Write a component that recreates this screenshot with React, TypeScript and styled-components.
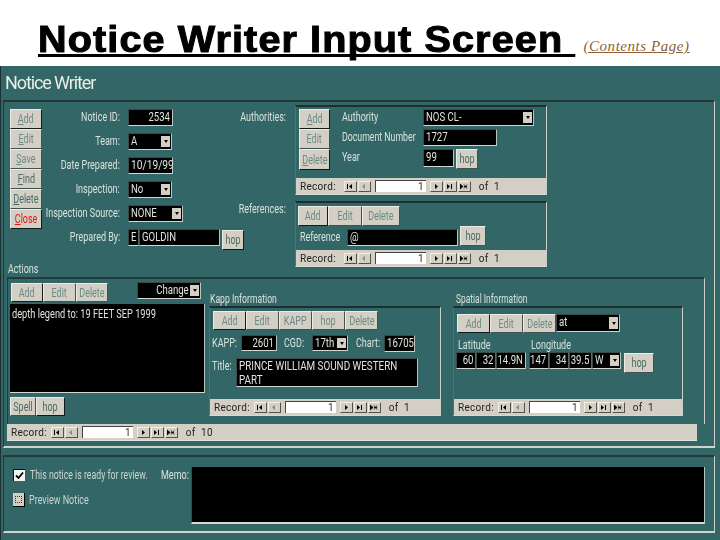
import React from "react";
import styled, { createGlobalStyle } from "styled-components";

const Global = createGlobalStyle`
  html, body { margin: 0; padding: 0; background: #fff; }
  #root { width: 720px; height: 540px; overflow: hidden; }
`;

const TEAL = "#336666";
const GREY = "#d4cfc4";
const UI = `Roboto, "Liberation Sans", sans-serif`;

const Page = styled.div`
  width: 720px;
  height: 540px;
  display: flex;
  flex-direction: column;
  background: #fff;
  font-family: ${UI};
  font-size: 12px;
`;
const Header = styled.header`
  height: 66px;
  flex: none;
  display: flex;
  align-items: flex-start;
  padding-left: 38px;
`;
const MainTitle = styled.h1`
  margin: 19px 0 0;
  font: bold 36px/42px "Liberation Sans", Arial, sans-serif;
  letter-spacing: 1px;
  -webkit-text-stroke: 1px #000;
  color: #000;
  white-space: pre;
  text-decoration: underline;
  text-decoration-thickness: 3px;
  text-underline-offset: 2px;
  text-decoration-skip-ink: none;
  transform: scaleX(1.1);
  transform-origin: left center;
`;
const ContentsLink = styled.a`
  margin: 38px 0 0 57px;
  font: italic 15px/16px "Liberation Serif", serif;
  letter-spacing: 0.55px;
  white-space: nowrap;
  color: #8a5f38;
  text-decoration: underline;
`;
const Win = styled.main`
  flex: 1;
  background: ${TEAL};
  color: #d8e2dc;
  border-left: 1px solid #1d3030;
  display: flex;
  flex-direction: column;
  min-height: 0;
  filter: blur(0.3px);
`;
const WinTitle = styled.div`
  height: 34px;
  flex: none;
  box-sizing: border-box;
  padding: 6px 0 0 4px;
  font-size: 18px;
  line-height: 22px;
  letter-spacing: -1.1px;
  color: #e8eee8;
`;
/* The reference's screen font is tall and narrow; this squeezes a run of text to that shape. */
const Narrow = styled.span<{ $s?: number; $o?: string }>`
  display: inline-block;
  flex: none;
  white-space: pre;
  transform: scaleX(${(p) => p.$s ?? 0.75});
  transform-origin: ${(p) => p.$o ?? "left"} center;
`;
const Frame = styled.section<{ $h: number }>`
  height: ${(p) => p.$h}px;
  width: 712px;
  margin-left: 2px;
  flex: none;
  box-sizing: border-box;
  border-top: 2px solid #243a38;
  border-left: 1px solid #243a38;
  border-right: 1px solid #c9d0c8;
  border-bottom: 2px solid #cfd3cb;
`;
const TopRow = styled.div`
  height: 161px;
  display: flex;
`;
const ButtonColumn = styled.div`
  width: 32px;
  margin: 7px 0 0 6px;
  display: flex;
  flex-direction: column;
`;
const FieldGrid = styled.div`
  width: 202px;
  margin-top: 7px;
  display: grid;
  grid-template-columns: 78px auto;
  grid-auto-rows: 17px;
  column-gap: 8px;
  row-gap: 7px;
  align-content: start;
`;
const LabelBox = styled.label<{ $right?: boolean; $w?: number; $pad?: number; $top?: number }>`
  display: flex;
  justify-content: ${(p) => (p.$right ? "flex-end" : "flex-start")};
  width: ${(p) => (p.$w ? `${p.$w}px` : "auto")};
  flex: none;
  box-sizing: border-box;
  padding-left: ${(p) => p.$pad ?? 0}px;
  margin-top: ${(p) => p.$top ?? 0}px;
  line-height: 17px;
`;
const FieldPair = styled.div`
  display: flex;
  align-items: flex-start;
  gap: 2px;
`;
const JoinedFields = styled.div`
  display: flex;
  align-items: flex-start;
`;
const FieldBox = styled.div<{ $w: number; $h?: number; $right?: boolean; $ml?: number; $seg?: boolean }>`
  width: ${(p) => p.$w}px;
  height: ${(p) => p.$h ?? 17}px;
  margin-left: ${(p) => p.$ml ?? 0}px;
  flex: none;
  box-sizing: border-box;
  display: flex;
  justify-content: ${(p) => (p.$right ? "flex-end" : "flex-start")};
  background: #000;
  color: #e2e2dc;
  border-top: 1px solid #3a4a48;
  border-left: 1px solid #3a4a48;
  border-right: 1px solid ${(p) => (p.$seg ? "#5a6a68" : "#b9c4bc")};
  border-bottom: 1px solid #d4d8d0;
  padding: 0 2px;
  line-height: 14px;
`;
const SelectBox = styled.div<{ $w: number; $h?: number }>`
  width: ${(p) => p.$w}px;
  height: ${(p) => p.$h ?? 17}px;
  flex: none;
  box-sizing: border-box;
  display: flex;
  align-items: stretch;
  background: #000;
  color: #e2e2dc;
  border-top: 1px solid #3a4a48;
  border-left: 1px solid #3a4a48;
  border-right: 1px solid #b9c4bc;
  border-bottom: 1px solid #d4d8d0;
  line-height: 14px;
`;
const SelectText = styled.span<{ $right?: boolean }>`
  flex: 1;
  min-width: 0;
  padding: 0 1px 0 2px;
  display: flex;
  justify-content: ${(p) => (p.$right ? "flex-end" : "flex-start")};
`;
const SelectArrow = styled.span`
  width: 9px;
  margin: 2px 1px 2px 0;
  flex: none;
  display: flex;
  align-items: center;
  justify-content: center;
  background: ${GREY};
  &::after {
    content: "";
    border-left: 2.5px solid transparent;
    border-right: 2.5px solid transparent;
    border-top: 3px solid #000;
  }
`;
const BtnBox = styled.button<{ $w?: number; $h?: number; $muted?: boolean; $red?: boolean; $dark?: boolean; $top?: number; $ml?: number }>`
  width: ${(p) => (p.$w ? `${p.$w}px` : "100%")};
  height: ${(p) => p.$h ?? 20}px;
  margin-top: ${(p) => p.$top ?? 0}px;
  margin-left: ${(p) => p.$ml ?? 0}px;
  flex: none;
  box-sizing: border-box;
  padding: 0;
  display: flex;
  align-items: center;
  justify-content: center;
  background: ${GREY};
  border-top: 1px solid #ecebe4;
  border-left: 1px solid #ecebe4;
  border-right: 1px solid ${(p) => (p.$dark ? "#101c1c" : "#425250")};
  border-bottom: 1px solid ${(p) => (p.$dark ? "#101c1c" : "#425250")};
  font: inherit;
  line-height: 16px;
  color: ${(p) => (p.$red ? "#e01818" : p.$muted ? "#6b8a86" : "#4a6a68")};
`;
const SideGroup = styled.div`
  margin: 3px 0 0 0;
  display: grid;
  grid-template-columns: 42px 252px;
  column-gap: 9px;
  row-gap: 6px;
  align-content: start;
`;
const SubForm = styled.div<{ $w: number; $h: number }>`
  width: ${(p) => p.$w}px;
  height: ${(p) => p.$h}px;
  flex: none;
  box-sizing: border-box;
  display: flex;
  flex-direction: column;
  border-top: 2px solid #1e2e2c;
  border-left: 1px solid #5c6e6a;
  border-right: 1px solid #c9d0c8;
  border-bottom: 1px solid #d8dad2;
`;
const SubBody = styled.div`
  flex: 1;
  min-height: 0;
`;
const AuthBody = styled(SubBody)`
  display: flex;
  padding: 2px 0 0 3px;
`;
const NarrowButtons = styled.div`
  width: 31px;
  display: flex;
  flex-direction: column;
`;
const AuthGrid = styled.div`
  margin-left: 12px;
  display: grid;
  grid-template-columns: 81px auto;
  grid-auto-rows: 17px;
  row-gap: 3px;
  align-content: start;
`;
const Toolbar = styled.div<{ $pad?: string }>`
  display: flex;
  align-items: flex-start;
  padding: ${(p) => p.$pad ?? "0"};
`;
const RefRow = styled.div`
  display: flex;
  align-items: flex-start;
  padding: 3px 0 0 4px;
`;
const RecordBar = styled.div`
  height: 16px;
  flex: none;
  box-sizing: border-box;
  display: flex;
  align-items: center;
  padding-left: 4px;
  background: ${GREY};
  color: #222;
  font-size: 10px;
  letter-spacing: 0.3px;
`;
const RecordLabel = styled.span<{ $gap: number }>`
  margin-right: ${(p) => p.$gap}px;
`;
const NavBtn = styled.span<{ $after?: number }>`
  width: 13px;
  height: 11px;
  flex: none;
  margin-right: ${(p) => p.$after ?? 1}px;
  box-sizing: border-box;
  display: flex;
  align-items: center;
  justify-content: center;
  border-top: 1px solid #f0efe8;
  border-left: 1px solid #f0efe8;
  border-right: 1px solid #55524a;
  border-bottom: 1px solid #55524a;
  color: #000;
`;
const RecordInput = styled.span`
  width: 51px;
  height: 12px;
  flex: none;
  margin-right: 4px;
  box-sizing: border-box;
  background: #fff;
  border-top: 1px solid #444;
  border-left: 1px solid #444;
  color: #333;
  text-align: right;
  padding-right: 2px;
  line-height: 12px;
`;
const OfText = styled.span`
  margin-left: 4px;
  white-space: pre;
`;
const ActionsLabel = styled.div`
  height: 14px;
  padding-left: 4px;
  line-height: 13px;
`;
const ActionsBody = styled.div`
  width: 698px;
  height: 147px;
  margin-left: 3px;
  box-sizing: border-box;
  display: flex;
  border-top: 2px solid #243a38;
  border-left: 1px solid #243a38;
  border-right: 1px solid #c9d0c8;
`;
const ActionsFooter = styled.div`
  margin-left: 3px;
  width: 690px;
  border-bottom: 1px solid #e4e6de;
`;
const ActionsLeft = styled.div`
  width: 195px;
  margin: 0 4px 0 2px;
  display: flex;
  flex-direction: column;
`;
const ChangeSpacer = styled.div`
  margin: 3px 0 0 29px;
`;
const NoteArea = styled.div`
  width: 195px;
  height: 89px;
  margin-top: 2px;
  box-sizing: border-box;
  background: #000;
  color: #e2e2dc;
  border-right: 1px solid #b9c4bc;
  border-bottom: 1px solid #d4d8d0;
  padding: 3px 2px;
  line-height: 14px;
`;
const InfoColumn = styled.div<{ $gapRight?: number }>`
  display: flex;
  flex-direction: column;
  margin-right: ${(p) => p.$gapRight ?? 0}px;
`;
const InfoLabel = styled.div<{ $pad?: number }>`
  height: 27px;
  flex: none;
  box-sizing: border-box;
  padding: 13px 0 0 ${(p) => p.$pad ?? 1}px;
  line-height: 14px;
`;
const InfoRow = styled.div<{ $top: number }>`
  display: flex;
  align-items: flex-start;
  padding: ${(p) => p.$top}px 0 0 2px;
`;
const CoordHead = styled.div<{ $w: number }>`
  width: ${(p) => p.$w}px;
  flex: none;
  line-height: 14px;
  padding-left: 2px;
  box-sizing: border-box;
`;
const BottomFrame = styled(Frame)`
  margin-top: 7px;
  display: flex;
`;
const ReviewCol = styled.div`
  width: 157px;
  flex: none;
  padding: 11px 0 0 9px;
  box-sizing: border-box;
`;
const ReviewRow = styled.div<{ $top?: number }>`
  display: flex;
  align-items: center;
  margin-top: ${(p) => p.$top ?? 0}px;
  color: #c9d6d0;
`;
const Check = styled.span`
  width: 11px;
  height: 11px;
  margin-right: 5px;
  flex: none;
  display: flex;
  align-items: center;
  justify-content: center;
  background: #f4f4ee;
  border-top: 1px solid #111;
  border-left: 1px solid #111;
`;
const PreviewBtn = styled.span`
  width: 12px;
  height: 14px;
  margin-right: 4px;
  flex: none;
  box-sizing: border-box;
  background: ${GREY};
  border-right: 1px solid #000;
  border-bottom: 1px solid #000;
  padding: 3px 2px;
  &::after {
    content: "";
    display: block;
    height: 100%;
    border: 1px dotted #333;
    box-sizing: border-box;
  }
`;
const MemoWrap = styled.div`
  display: flex;
  align-items: flex-start;
  padding-top: 10px;
`;
const MemoArea = styled.div`
  width: 514px;
  height: 57px;
  box-sizing: border-box;
  background: #000;
  border-right: 1px solid #b9c4bc;
  border-bottom: 2px solid #d4d8d0;
  border-left: 1px solid #3a4a48;
`;

type NavKind = "first" | "prev" | "next" | "last" | "new";
const NAV: Record<NavKind, string> = {
  first: "M1 1v5h1V1zM6 1v5L3 3.5z",
  prev: "M5 1v5L2 3.5z",
  next: "M3 1v5l3-2.5z",
  last: "M1 1v5l3-2.5zM5 1v5h1V1z",
  new: "M0 1v5l3-2.5zM4 1.5 7 5.5M7 1.5 4 5.5M3.8 3.5h3.4",
};
const NavIcon = ({ kind, faded }: { kind: NavKind; faded?: boolean }) => (
  <svg width="8" height="7" viewBox="0 0 8 7">
    <path
      d={NAV[kind]}
      fill={faded ? "#8d8a80" : "#000"}
      stroke={kind === "new" ? "#000" : "none"}
      strokeWidth={kind === "new" ? 0.8 : 0}
    />
  </svg>
);

const Record = ({ gap = 4, of = "1" }: { gap?: number; of?: string }) => (
  <RecordBar>
    <RecordLabel $gap={gap}>Record:</RecordLabel>
    <NavBtn><NavIcon kind="first" /></NavBtn>
    <NavBtn $after={4}><NavIcon kind="prev" faded /></NavBtn>
    <RecordInput>1</RecordInput>
    <NavBtn><NavIcon kind="next" /></NavBtn>
    <NavBtn><NavIcon kind="last" /></NavBtn>
    <NavBtn><NavIcon kind="new" /></NavBtn>
    <OfText> of  {of}</OfText>
  </RecordBar>
);

type Kids = { children?: React.ReactNode };

const Lbl = ({ right, w, pad, top, s, children }: Kids & { right?: boolean; w?: number; pad?: number; top?: number; s?: number }) => (
  <LabelBox $right={right} $w={w} $pad={pad} $top={top}>
    <Narrow $s={s} $o={right ? "right" : "left"}>{children}</Narrow>
  </LabelBox>
);

const Fld = ({ w, h, right, ml, s = 0.8, seg, children }: Kids & { w: number; h?: number; right?: boolean; ml?: number; s?: number; seg?: boolean }) => (
  <FieldBox $w={w} $h={h} $right={right} $ml={ml} $seg={seg}>
    <Narrow $s={s} $o={right ? "right" : "left"}>{children}</Narrow>
  </FieldBox>
);

const Select = ({ w, h, right, children }: Kids & { w: number; h?: number; right?: boolean }) => (
  <SelectBox $w={w} $h={h}>
    <SelectText $right={right}>
      <Narrow $s={0.8} $o={right ? "right" : "left"}>{children}</Narrow>
    </SelectText>
    <SelectArrow />
  </SelectBox>
);

const Btn = ({ w, h, muted, red, dark, top, ml, children }: Kids & { w?: number; h?: number; muted?: boolean; red?: boolean; dark?: boolean; top?: number; ml?: number }) => (
  <BtnBox $w={w} $h={h} $muted={muted} $red={red} $dark={dark} $top={top} $ml={ml}>
    <Narrow $o="center">{children}</Narrow>
  </BtnBox>
);

export default function App() {
  return (
    <Page>
      <Global />
      <Header>
        <MainTitle>Notice Writer Input Screen </MainTitle>
        <ContentsLink href="#">(Contents Page)</ContentsLink>
      </Header>
      <Win>
        <WinTitle>Notice Writer</WinTitle>
        <Frame $h={348}>
          <TopRow>
            <ButtonColumn>
              <Btn muted dark><u>A</u>dd</Btn>
              <Btn muted><u>E</u>dit</Btn>
              <Btn muted><u>S</u>ave</Btn>
              <Btn><u>F</u>ind</Btn>
              <Btn><u>D</u>elete</Btn>
              <Btn red dark><u>C</u>lose</Btn>
            </ButtonColumn>
            <FieldGrid>
              <Lbl right>Notice ID:</Lbl>
              <Fld w={45} right>2534</Fld>
              <Lbl right>Team:</Lbl>
              <Select w={44}>A</Select>
              <Lbl right>Date Prepared:</Lbl>
              <Fld w={45} s={0.85}>10/19/99</Fld>
              <Lbl right>Inspection:</Lbl>
              <Select w={44}>No</Select>
              <Lbl right>Inspection Source:</Lbl>
              <Select w={55}>NONE</Select>
              <Lbl right>Prepared By:</Lbl>
              <FieldPair>
                <JoinedFields>
                  <Fld w={11} seg>E</Fld>
                  <Fld w={81}>GOLDIN</Fld>
                </JoinedFields>
                <Btn w={22} h={20} top={1} dark>hop</Btn>
              </FieldPair>
            </FieldGrid>
            <SideGroup>
              <Lbl right top={4}>Authorities:</Lbl>
              <SubForm $w={252} $h={90}>
                <AuthBody>
                  <NarrowButtons>
                    <Btn muted dark><u>A</u>dd</Btn>
                    <Btn muted>Edit</Btn>
                    <Btn muted dark h={21}><u>D</u>elete</Btn>
                  </NarrowButtons>
                  <AuthGrid>
                    <Lbl>Authority</Lbl>
                    <Select w={111}>NOS CL-</Select>
                    <Lbl s={0.73}>Document Number</Lbl>
                    <Fld w={74}>1727</Fld>
                    <Lbl>Year</Lbl>
                    <FieldPair>
                      <Fld w={31} h={18}>99</Fld>
                      <Btn w={22} h={20} top={0}>hop</Btn>
                    </FieldPair>
                  </AuthGrid>
                </AuthBody>
                <Record gap={8} />
              </SubForm>
              <Lbl right>References:</Lbl>
              <SubForm $w={252} $h={66}>
                <SubBody>
                  <Toolbar $pad="3px 0 0 2px">
                    <Btn w={30} h={20} muted dark>Add</Btn>
                    <Btn w={34} h={20} muted>Edit</Btn>
                    <Btn w={38} h={20} muted>Delete</Btn>
                  </Toolbar>
                  <RefRow>
                    <Lbl w={47}>Reference</Lbl>
                    <Fld w={111}>@</Fld>
                    <Btn w={26} h={20} top={-3} ml={2}>hop</Btn>
                  </RefRow>
                </SubBody>
                <Record gap={8} />
              </SubForm>
            </SideGroup>
          </TopRow>
          <ActionsLabel><Narrow>Actions</Narrow></ActionsLabel>
          <ActionsBody>
            <ActionsLeft>
              <Toolbar>
                <Toolbar $pad="4px 0 0 1px">
                  <Btn w={32} h={19} muted dark>Add</Btn>
                  <Btn w={33} h={19} muted>Edit</Btn>
                  <Btn w={32} h={19} muted>Delete</Btn>
                </Toolbar>
                <ChangeSpacer>
                  <Select w={64} right>Change</Select>
                </ChangeSpacer>
              </Toolbar>
              <NoteArea><Narrow $s={0.77}>depth legend to: 19 FEET SEP 1999</Narrow></NoteArea>
              <Toolbar $pad="4px 0 0 0">
                <Btn w={26} h={19}>Spell</Btn>
                <Btn w={29} h={19} dark>hop</Btn>
              </Toolbar>
            </ActionsLeft>
            <InfoColumn $gapRight={12}>
              <InfoLabel><Narrow $s={0.72}>Kapp Information</Narrow></InfoLabel>
              <SubForm $w={232} $h={110}>
                <SubBody>
                  <Toolbar $pad="3px 0 0 3px">
                    <Btn w={33} h={19} muted dark>Add</Btn>
                    <Btn w={33} h={19} muted>Edit</Btn>
                    <Btn w={33} h={19} muted>KAPP</Btn>
                    <Btn w={33} h={19} muted>hop</Btn>
                    <Btn w={33} h={19} muted>Delete</Btn>
                  </Toolbar>
                  <InfoRow $top={5}>
                    <Lbl w={29}>KAPP:</Lbl>
                    <Fld w={36} h={16} right>2601</Fld>
                    <Lbl w={35} pad={7}>CGD:</Lbl>
                    <Select w={36} h={16}>17th</Select>
                    <Lbl w={36} pad={8}>Chart:</Lbl>
                    <Fld w={31}>16705</Fld>
                  </InfoRow>
                  <InfoRow $top={6}>
                    <Lbl w={24}>Title:</Lbl>
                    <Fld w={182} h={29} s={0.82}>PRINCE WILLIAM SOUND WESTERN{"\n"}PART</Fld>
                  </InfoRow>
                </SubBody>
                <Record />
              </SubForm>
            </InfoColumn>
            <InfoColumn>
              <InfoLabel $pad={3}><Narrow $s={0.7}>Spatial Information</Narrow></InfoLabel>
              <SubForm $w={230} $h={110}>
                <SubBody>
                  <Toolbar $pad="6px 0 0 3px">
                    <Btn w={33} h={19} muted dark>Add</Btn>
                    <Btn w={33} h={19} muted>Edit</Btn>
                    <Btn w={33} h={19} muted>Delete</Btn>
                    <Select w={64} h={18}>at</Select>
                  </Toolbar>
                  <InfoRow $top={5}>
                    <CoordHead $w={73}><Narrow>Latitude</Narrow></CoordHead>
                    <CoordHead $w={90}><Narrow>Longitude</Narrow></CoordHead>
                  </InfoRow>
                  <InfoRow $top={0}>
                    <Fld w={20} right seg>60</Fld>
                    <Fld w={20} right seg>32</Fld>
                    <Fld w={30} right>14.9N</Fld>
                    <Fld w={20} right ml={3} seg>147</Fld>
                    <Fld w={20} right seg>34</Fld>
                    <Fld w={23} right seg>39.5</Fld>
                    <Select w={29}>W</Select>
                    <Btn w={30} h={20} top={1} ml={3}>hop</Btn>
                  </InfoRow>
                </SubBody>
                <Record />
              </SubForm>
            </InfoColumn>
          </ActionsBody>
          <ActionsFooter>
            <Record gap={4} of="10" />
          </ActionsFooter>
        </Frame>
        <BottomFrame $h={78}>
          <ReviewCol>
            <ReviewRow>
              <Check>
                <svg width="9" height="9" viewBox="0 0 9 9">
                  <path d="M1 4.5 3.5 7 8 1.5" fill="none" stroke="#000" strokeWidth="1.8" />
                </svg>
              </Check>
              <Narrow $s={0.73}>This notice is ready for review.</Narrow>
            </ReviewRow>
            <ReviewRow $top={11}>
              <PreviewBtn />
              <Narrow $s={0.75}>Preview Notice</Narrow>
            </ReviewRow>
          </ReviewCol>
          <MemoWrap>
            <Lbl w={30}>Memo:</Lbl>
            <MemoArea />
          </MemoWrap>
        </BottomFrame>
      </Win>
    </Page>
  );
}
